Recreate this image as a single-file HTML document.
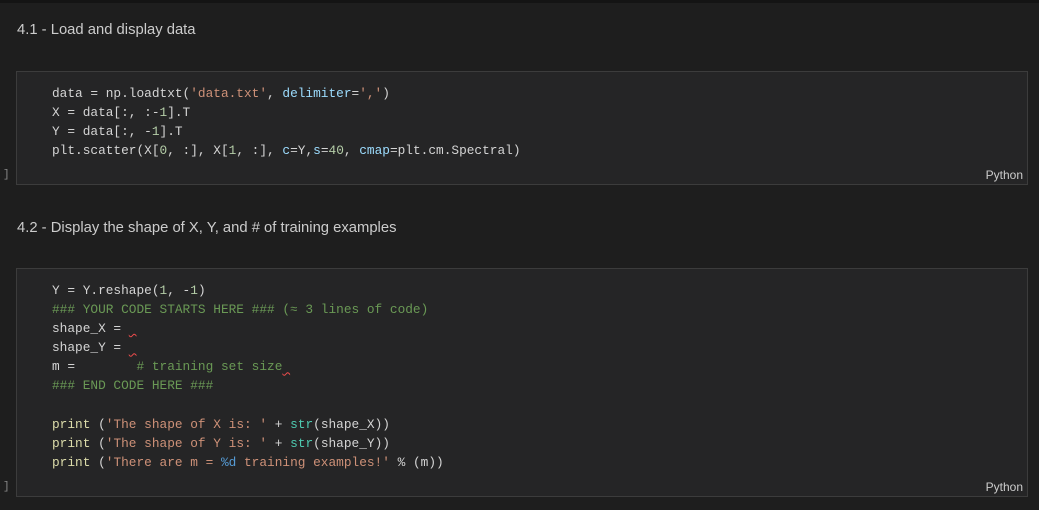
<!DOCTYPE html>
<html><head><style>
body{margin:0;width:1039px;height:510px;background:#1e1e1e;position:relative;overflow:hidden;font-family:"Liberation Sans",sans-serif}
.top{position:absolute;left:0;top:0;width:1039px;height:3px;background:#141414}
.h{position:absolute;left:17px;color:#cccccc;font-size:14.8px}
.cell{position:absolute;left:16px;width:1010px;background:#252526;border:1px solid #3c3c3c}
pre{margin:0;position:absolute;left:35px;font-family:"Liberation Mono",monospace;font-size:12.8px;line-height:19.1px;color:#d4d4d4}
.py{position:absolute;right:4px;bottom:2px;color:#cccccc;font-size:12px}
.br{position:absolute;left:3px;color:#888;font-size:11px;font-family:"Liberation Mono",monospace}
.s{color:#ce9178}.k{color:#9cdcfe}.n{color:#b5cea8}.c{color:#6a9955}.f{color:#dcdcaa}.b{color:#4ec9b0}.p{color:#569cd6}
.sq{text-decoration:underline wavy #f14c4c;text-decoration-thickness:1px}
</style></head><body>
<div class="top"></div>
<div class="h" style="top:22px">4.1 - Load and display data</div>
<div class="cell" style="top:71px;height:112px">
<pre style="top:12px">data = np.loadtxt(<span class="s">'data.txt'</span>, <span class="k">delimiter</span>=<span class="s">','</span>)
X = data[:, :-<span class="n">1</span>].T
Y = data[:, -<span class="n">1</span>].T
plt.scatter(X[<span class="n">0</span>, :], X[<span class="n">1</span>, :], <span class="k">c</span>=Y,<span class="k">s</span>=<span class="n">40</span>, <span class="k">cmap</span>=plt.cm.Spectral)</pre>
<div class="py">Python</div>
</div>
<div class="br" style="top:169px">]</div>
<div class="h" style="top:220px">4.2 - Display the shape of X, Y, and # of training examples</div>
<div class="cell" style="top:268px;height:227px">
<pre style="top:12px">Y = Y.reshape(<span class="n">1</span>, -<span class="n">1</span>)
<span class="c">### YOUR CODE STARTS HERE ### (≈ 3 lines of code)</span>
shape_X = <span class="sq"> </span>
shape_Y = <span class="sq"> </span>
m =        <span class="c"># training set size</span><span class="sq"> </span>
<span class="c">### END CODE HERE ###</span>

<span class="f">print</span> (<span class="s">'The shape of X is: '</span> + <span class="b">str</span>(shape_X))
<span class="f">print</span> (<span class="s">'The shape of Y is: '</span> + <span class="b">str</span>(shape_Y))
<span class="f">print</span> (<span class="s">'There are m = </span><span class="p">%d</span><span class="s"> training examples!'</span> % (m))</pre>
<div class="py">Python</div>
</div>
<div class="br" style="top:481px">]</div>
</body></html>
